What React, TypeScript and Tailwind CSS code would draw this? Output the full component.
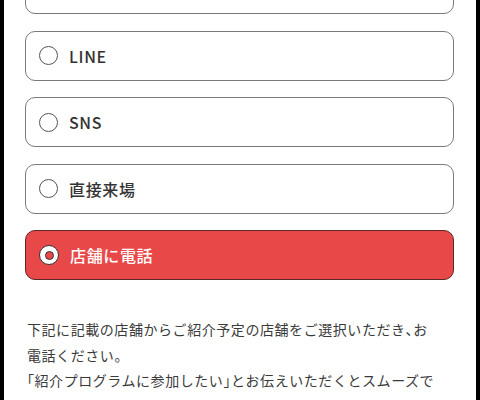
import React, { useState } from "react";

const options = ["メール", "LINE", "SNS", "直接来場", "店舗に電話"];

const RadioDot: React.FC<{ checked: boolean }> = ({ checked }) =>
  checked ? (
    <span className="flex h-[20px] w-[20px] shrink-0 items-center justify-center rounded-full border border-[#333] bg-white">
      <span className="h-[9px] w-[9px] rounded-full border-[1.5px] border-[#333] bg-[#e84848]" />
    </span>
  ) : (
    <span className="h-[19px] w-[19px] shrink-0 rounded-full border-[1.5px] border-[#555] bg-white" />
  );

// half-width punctuation like the original page
const P: React.FC<{ children: React.ReactNode }> = ({ children }) => (
  <span className="[font-feature-settings:'halt']">{children}</span>
);

const App: React.FC = () => {
  const [selected, setSelected] = useState("店舗に電話");

  return (
    <div
      className="h-[400px] w-[480px] overflow-hidden border-x-4 border-black bg-white"
      style={{ fontFamily: '"Noto Sans CJK JP", "Noto Sans", sans-serif' }}
    >
      <div className="pl-[21px] pr-[22px]">
        {/* contact method options */}
        <div className="-mt-[36px] flex flex-col gap-[16.5px]">
          {options.map((opt) => {
            const active = opt === selected;
            return (
              <button
                key={opt}
                type="button"
                onClick={() => setSelected(opt)}
                className={`flex h-[50px] w-full items-center gap-[11px] rounded-[10px] pl-[13px] text-left text-[16px] font-medium tracking-[0.04em] ${
                  active
                    ? "border border-[#5a2626] bg-[#e84848] text-white"
                    : "border-[1.5px] border-[#7a7a7a] bg-white text-[#333]"
                }`}
              >
                <RadioDot checked={active} />
                <span className="leading-none">{opt}</span>
              </button>
            );
          })}
        </div>

        <p className="mt-[37px] pl-[2px] text-[14px] leading-[25.5px] tracking-[0.04em] text-[#3a3a3a]">
          下記に記載の店舗からご紹介予定の店舗をご選択いただき<P>、</P>お
          <br />
          電話ください<P>。</P>
          <br />
          <P>「</P>紹介プログラムに参加したい<P>」</P>とお伝えいただくとスムーズです<P>。</P>
        </p>
      </div>
    </div>
  );
};

export default App;
